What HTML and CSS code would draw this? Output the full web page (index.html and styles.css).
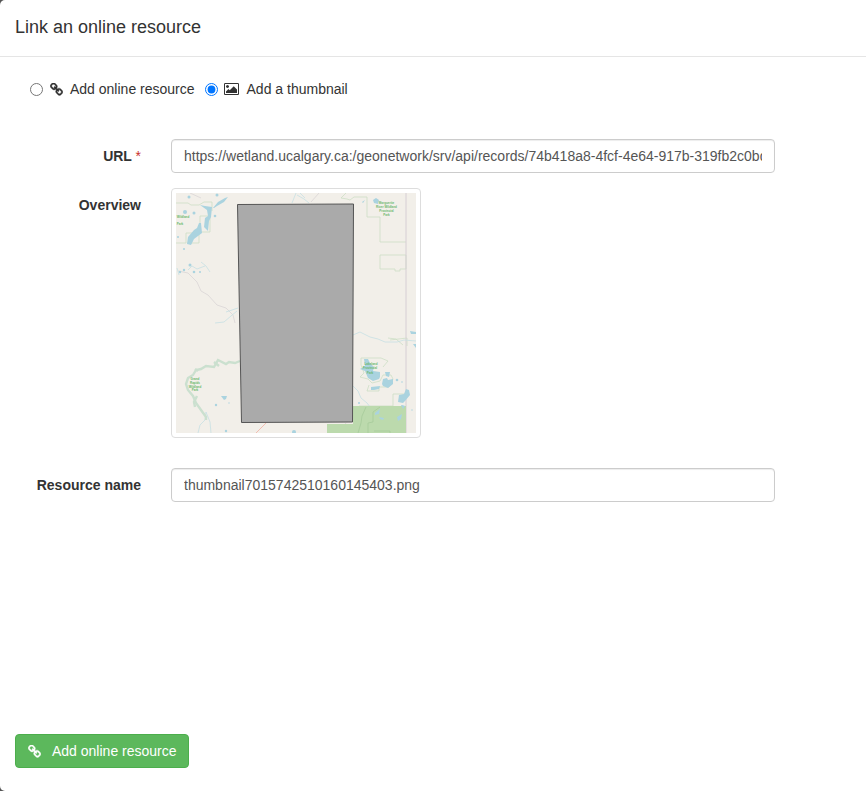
FILE: index.html
```html
<!DOCTYPE html>
<html lang="en">
<head>
<meta charset="utf-8">
<title>Link an online resource</title>
<link rel="stylesheet" href="styles.css">
</head>
<body>
<svg class="defs" aria-hidden="true">
  <symbol id="chain" viewBox="64 64 1664 1664"><path d="M1520 1216q0-40-28-68l-208-208q-28-28-68-28-42 0-72 32 3 3 19 18.500t21.500 21.500 15 19 13 25.500 3.500 27.500q0 40-28 68t-68 28q-15 0-27.500-3.500t-25.500-13-19-15-21.500-21.500-18.500-19q-33 31-33 73 0 40 28 68l206 207q27 27 68 27 40 0 68-26l147-146q28-28 28-67zm-703-705q0-40-28-68l-206-207q-28-28-68-28-39 0-68 27l-147 146q-28 28-28 67 0 40 28 68l208 208q27 27 68 27 42 0 72-31-3-3-19-18.500t-21.500-21.500-15-19-13-25.500-3.500-27.500q0-40 28-68t68-28q15 0 27.500 3.500t25.500 13 19 15 21.500 21.500 18.500 19q33-31 33-73zm895 705q0 120-85 203l-147 146q-83 83-203 83-121 0-204-85l-206-207q-83-83-83-203 0-123 88-209l-88-88q-86 88-208 88-120 0-204-84l-208-208q-84-84-84-204t85-203l147-146q83-83 203-83 121 0 204 85l206 207q83 83 83 203 0 123-88 209l88 88q86-88 208-88 120 0 204 84l208 208q84 84 84 204z"/></symbol>
  <symbol id="picture" viewBox="-64 128 1920 1536"><path d="M576 576q0 80-56 136t-136 56-136-56-56-136 56-136 136-56 136 56 56 136zm1024 384v448h-1408v-192l320-320 160 160 512-512zm96-704h-1600q-13 0-22.500 9.500t-9.500 22.500v1216q0 13 9.500 22.500t22.500 9.500h1600q13 0 22.500-9.500t9.500-22.500v-1216q0-13-9.500-22.500t-22.500-9.500zm160 32v1216q0 66-47 113t-113 47h-1600q-66 0-113-47t-47-113v-1216q0-66 47-113t113-47h1600q66 0 113 47t47 113z"/></symbol>
</svg>
<div class="modal">
  <header class="modal-header"><h4>Link an online resource</h4></header>
  <main class="modal-body">
    <div class="types">
      <label class="type"><input type="radio" name="type"><svg class="chain"><use href="#chain"/></svg><span>Add online resource</span></label>
      <label class="type"><input type="radio" name="type" checked><svg class="picture"><use href="#picture"/></svg><span>Add a thumbnail</span></label>
    </div>
    <div class="row url-row">
      <label class="name" for="url">URL <span class="required">*</span></label>
      <input class="field" id="url" type="text" value="https://wetland.ucalgary.ca:/geonetwork/srv/api/records/74b418a8-4fcf-4e64-917b-319fb2c0bdaa/attachments/thumbnail7015742510160145403.png">
    </div>
    <div class="row overview-row">
      <span class="name">Overview</span>
      <div class="thumbnail">
        <svg class="map" viewBox="176 193 240 240" role="img" aria-label="Overview map">
          <rect x="176" y="193" width="240" height="240" fill="#f2efe9"/>
          <g class="park-lines">
            <path d="M176 203h12l3 2h8l5-3h8v9M200 216v17h-14v10h-10M200 216h10v16h-11v11h-12"/>
            <path d="M346 193l-5 5 6 1 3 1 4-3h13v20h13v25h26M380 255h26v14h-6v2h-5v-2h-15z"/>
            <path d="M388 338l8 1 7 6M390 340l17-2v8"/>
            <path d="M361 365v-7h20l7 3-5 6M361 365l3 8-4 4 8 2 4 4 8-2 3-6h8l2 4-4 8h-10v4h-12l2-6"/>
            <path d="M393 406v-12h13M359 406h34"/>
          </g>
          <path d="M406 193v240" class="boundary"/>
          <g class="roads">
            <path d="M178 271l10 2 9 9 4 9 7 4 9 10 9 3 7 7 2 8M190 193l11 5M319 193l-8 9M346 423l-8 10"/>
          </g>
          <g class="streams">
            <path d="M226 312l12-4M237 311l-6 5-7 6-9 1M292 203l4-10M297 195l7 4 5 4M300 193l5 5M353 335l7-3 10 5 8 2 7 3h12l7-2 12 1M353 386l5 5 3 7 6 5 3 4"/>
            <path d="M206 412l-1 8-5 5-2 8M206 412l4 10 1 11M188 270l4-4 5 3 8-3M179 275l-2-7M201 262l5 4 4 6"/>
            <path d="M366 407l-4 9-1 7-3 10M382 415l4-5M401 416l-4 8"/>
          </g>
          <g class="water">
            <path d="M187 244l1-7 6-7 3-2 2-5h2l1 10-8 6-3 6zM204 227l1-9 3-2-1-6-7-5 5 1 7 1-1 10-2 4-1 10zM213 208l5-6 7-4 3-1-4 5-7 4-3 2z"/>
            <path d="M364 359l4 0 2 4 4 4-1 4 7 1v5l-1 2-6 2-5-3-3-7-5-2 5-3zM385 372h5l-1 5-3-1zM382 384l1-5 4-1 1 2 5-1 0 5-5 4-5-2zM371 387l9-1-1 3-5 1-3 0zM398 402l1-7 5-1 2-5 3 1 1 5-5 6-2 2zM401 405l4 1-1 2zM221 396h6l-1 3-2 1z"/>
            <path d="M373 200l3-2 3 2-1 4-4-1zM362 202l3-2-2 3M410 331l6 1v2h-5zM413 344h3v4z"/>
            <circle cx="189" cy="197" r="1.500"/><circle cx="217" cy="195" r="1.500"/><circle cx="185" cy="212" r="2"/><circle cx="194" cy="213" r="1.500"/><circle cx="190" cy="265" r="1.500"/><circle cx="184" cy="270" r="1.200"/><circle cx="194" cy="272" r="1.300"/><circle cx="180" cy="272" r="1.200"/><circle cx="200" cy="272" r="1"/><circle cx="215" cy="216" r="1.300"/><circle cx="178" cy="237" r="1"/><circle cx="184" cy="249" r="1"/><circle cx="216" cy="405" r="1.200"/><circle cx="229" cy="403" r=".7"/><circle cx="226" cy="431" r="1.200"/><circle cx="359" cy="403" r="1"/><circle cx="397" cy="380" r="1.300"/><circle cx="294" cy="432" r="2"/><circle cx="402" cy="382" r=".8"/><circle cx="412" cy="410" r=".7"/>
          </g>
          <path d="M353 406h53v27h-79v-9h26z" fill="#bcdaad"/>
          <path class="park-dark" d="M368 433v-10l5-1v-10l7-5M374 431h16v2M366 407l-4 9-1 7-3 10"/>
          <g class="water"><path d="M375 413l5-4-1 5-4 1zM379 417l5 1-1 2-3-1zM397 417l5-3-1 5-3 2zM401 405l4 1-2 3z"/></g>
          <g class="green-river">
            <path d="M240 361l-5 2-6-1-3 2-8-4-4 7-8-1-5 3-5 1-3 5-5 3-2 6 2 6 5 6 3 7 5 7 5 7 0 3"/>
            <path d="M195 369l3 2M197 396l-3 6 1 5M214 362l5 4"/>
          </g>
          <path d="M256 433l10-10" class="pink-road"/>
          <g class="map-text"><text x="386.500" y="204">Marguerite</text><text x="386.500" y="208">River Wildland</text><text x="386.500" y="212">Provincial</text><text x="386.500" y="216">Park</text><text x="183" y="218">Wildland</text><text x="180" y="225">Park</text><text x="195" y="380">Grand</text><text x="195" y="384">Rapids</text><text x="195" y="388">Wildland</text><text x="195" y="391">Park</text><text x="371" y="365">Lakeland</text><text x="370" y="369">Provincial</text><text x="370" y="374">Park</text></g>
          <path d="M237.500 204.500L353.500 204 352.500 422 241.500 422.500Z" fill="#aaa" stroke="#555" stroke-width="1"/>
        </svg>
      </div>
    </div>
    <div class="row">
      <label class="name" for="resource">Resource name</label>
      <input class="field" id="resource" type="text" value="thumbnail7015742510160145403.png">
    </div>
  </main>
  <footer class="modal-footer"><button class="submit" type="button"><svg class="chain"><use href="#chain"/></svg><span>Add online resource</span></button></footer>
</div>
</body>
</html>
```
FILE: styles.css
```css
* { box-sizing: border-box; }
body { margin: 0; background: #555; color: #333; font: 14px/20px "Liberation Sans", Arial, sans-serif; }
.defs { position: absolute; width: 0; height: 0; }
.modal { display: flex; flex-direction: column; height: 791px; background: #fff; border-radius: 5px 0 0 5px; overflow: hidden; }
.modal-header { height: 57px; padding: 14px 15px; border-bottom: 1px solid #e5e5e5; }
h4 { margin: 0; font-size: 18px; line-height: 26px; font-weight: 400; }
.modal-body { flex: 1; padding: 22px 15px 0; }
.types { display: flex; gap: 10px; height: 20px; padding-left: 15px; }
.type { display: flex; align-items: center; }
.type input { width: 13px; height: 13px; margin: 1px 7px 0 0; }
.type svg { fill: #333; margin-right: 7px; }
.chain { width: 13px; height: 13px; flex: none; stroke: #333; stroke-width: 50px; }
.type .picture { width: 15px; height: 12px; margin: 0 7.5px 0 -.5px; }
.row { display: grid; grid-template-columns: 126px 604px; column-gap: 30px; }
.url-row { margin-top: 40px; }
.overview-row { margin: 15px 0 30px; }
.name { padding-top: 7px; text-align: right; font-weight: 700; }
.required { color: #c9302c; font-weight: 400; }
.field { width: 604px; height: 34px; padding: 6px 12px; color: #555; background: #fff; border: 1px solid #ccc; border-radius: 4px; box-shadow: inset 0 1px 1px rgba(0,0,0,.075); font: inherit; }
.thumbnail { width: 250px; height: 250px; padding: 4px; border: 1px solid #ddd; border-radius: 4px; }
.map { display: block; width: 240px; height: 240px; }
.park-lines { fill: none; stroke: #c9dcc2; stroke-width: .7; }
.park-dark { fill: none; stroke: #a3c998; stroke-width: .7; }
.boundary { stroke: #d6ced4; stroke-width: 1; }
.roads { fill: none; stroke: #dcd8d8; stroke-width: .9; }
.streams { fill: none; stroke: #c6dfe3; stroke-width: .8; }
.water { fill: #aad3df; }
.green-river { fill: none; stroke: #cbe0cf; stroke-width: 2.4; }
.pink-road { stroke: #f2bdb1; stroke-width: 1; }
.map-text { fill: #6ab76b; font-size: 3px; font-weight: 700; text-anchor: middle; }
.modal-footer { padding: 0 15px 23px; }
.submit { display: flex; align-items: center; width: 174px; height: 34px; padding: 0 12px; color: #fff; background: #5cb85c; border: 1px solid #4cae4c; border-radius: 4px; font: inherit; white-space: nowrap; }
.submit svg { fill: #fff; stroke: #fff; margin-right: 11px; }
```
